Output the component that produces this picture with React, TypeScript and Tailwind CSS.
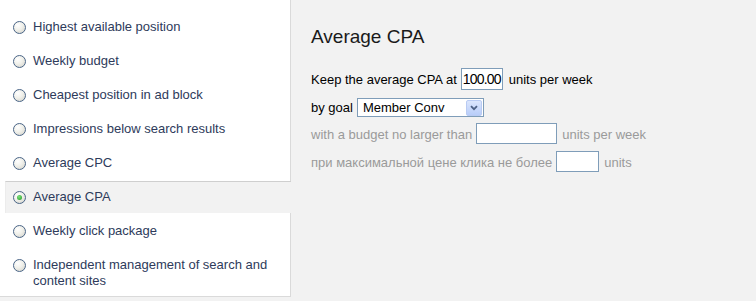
import React from "react";

const items: { label: string[]; selected?: boolean }[] = [
  { label: ["Highest available position"] },
  { label: ["Weekly budget"] },
  { label: ["Cheapest position in ad block"] },
  { label: ["Impressions below search results"] },
  { label: ["Average CPC"] },
  { label: ["Average CPA"], selected: true },
  { label: ["Weekly click package"] },
  { label: ["Independent management of search and", "content sites"] },
];

function Radio({ checked }: { checked?: boolean }) {
  return (
    <span className="relative mt-[1.5px] flex h-[13px] w-[13px] shrink-0 items-center justify-center rounded-full border border-[#4a6587] bg-[radial-gradient(circle_at_35%_30%,#ffffff_0%,#f0f0ea_45%,#cfcfc8_100%)]">
      {checked && (
        <span className="h-[5px] w-[5px] rounded-full bg-[radial-gradient(circle_at_40%_35%,#7ee07e,#1e9a1e)]" />
      )}
    </span>
  );
}

export default function App() {
  return (
    <div
      className="flex h-[301px] w-[756px] overflow-hidden bg-[#f2f2f2] text-[13px]"
      style={{ fontFamily: '"Liberation Sans", Arial, sans-serif' }}
    >
      <div className="h-[297px] w-[291px] shrink-0 border-r border-b border-[#dadada] bg-white pt-[10px] pl-[5px]">
        {items.map((it, i) => (
          <div key={i} className="flex h-[34px] flex-col justify-center">
            <div
              className={
                it.selected
                  ? "-mr-[1px] flex h-[32px] items-start gap-[7px] border-t border-l border-[#cfcfcf] border-l-[#ececec] bg-[#f2f2f2] pl-[7px] pt-[7px]"
                  : "flex h-[32px] items-start gap-[7px] border-t border-l border-transparent pl-[7px] pt-[7px]"
              }
            >
              <Radio checked={it.selected} />
              <div className="leading-[16px] text-[#2e3b5b] whitespace-nowrap">
                {it.label.map((l, j) => (
                  <div key={j}>{l}</div>
                ))}
              </div>
            </div>
          </div>
        ))}
      </div>
      <div className="flex-1 pl-[20px] pt-[26px] text-black">
        <div className="h-[22px] text-[19px] leading-[22px] text-[#1a1a1a]">Average CPA</div>
        <div className="mt-[20px] flex flex-col">
          <div className="flex h-[22px] items-center">
            <span className="mt-[2px]">Keep the average CPA at</span>
            <span className="ml-[4px] flex h-[22px] w-[42px] items-center justify-center border border-[#7f9db9] bg-white text-[14px] tracking-[-0.8px]">
              100.00
            </span>
            <span className="ml-[6px] mt-[2px]">units per week</span>
          </div>
          <div className="mt-[8px] flex h-[19px] items-center">
            <span>by goal</span>
            <span className="ml-[4px] flex h-[19px] w-[127px] items-center justify-between border border-[#7f9db9] bg-white pl-[5px] pr-[1px]">
              <span>Member Conv</span>
              <span className="flex h-[16px] w-[16px] items-center justify-center rounded-[2px] border border-[#b9cbf3] bg-[linear-gradient(#dbe6fd,#b8cdf9)]">
                <svg width="8" height="6" viewBox="0 0 8 6">
                  <path d="M1 1.2 L4 4.2 L7 1.2" fill="none" stroke="#4d6185" strokeWidth="1.8" />
                </svg>
              </span>
            </span>
          </div>
          <div className="mt-[6px] flex h-[21px] items-center text-[#9a9a9a]">
            <span className="mt-[2px]">with a budget no larger than</span>
            <span className="ml-[4px] h-[21px] w-[81px] border border-[#7f9db9] bg-white" />
            <span className="ml-[5px] mt-[2px]">units per week</span>
          </div>
          <div className="mt-[7px] flex h-[21px] items-center text-[#9a9a9a]">
            <span className="mt-[2px]">при максимальной цене клика не более</span>
            <span className="ml-[4px] h-[21px] w-[43px] border border-[#7f9db9] bg-white" />
            <span className="ml-[5px] mt-[2px]">units</span>
          </div>
        </div>
      </div>
    </div>
  );
}
